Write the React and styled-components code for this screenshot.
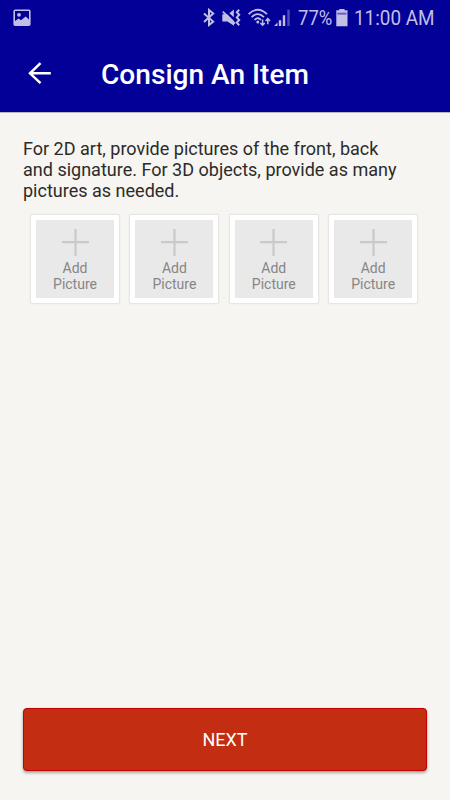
import React from "react";
import styled, { createGlobalStyle } from "styled-components";

const GlobalStyle = createGlobalStyle`
  * { box-sizing: border-box; }
  body { margin: 0; background: #f6f5f1; font-family: Roboto, "Liberation Sans", sans-serif; }
`;

const Screen = styled.div`
  width: 450px;
  height: 800px;
  display: flex;
  flex-direction: column;
  background: #f6f5f1;
  overflow: hidden;
`;

const Header = styled.header`
  height: 113px;
  flex: none;
  background: #030098;
  border-bottom: 1px solid #b9b7bc;
`;

const StatusBar = styled.div`
  height: 36px;
  display: flex;
  align-items: flex-start;
  color: #c1bfe6;
`;

const Icon = styled.svg`
  display: block;
  flex: none;
  width: ${(p) => p.$w}px;
  height: ${(p) => p.$h}px;
  margin-left: ${(p) => p.$left || 0}px;
  margin-top: ${(p) => p.$top || 0}px;
  fill: currentColor;
`;

const StatusText = styled.span`
  width: ${(p) => p.$w}px;
  margin: 6px 0 0 ${(p) => p.$left}px;
  font-size: 21px;
  line-height: 24px;
  white-space: nowrap;
  transform: scaleX(${(p) => p.$scale});
  transform-origin: left;
`;

const TitleBar = styled.div`
  height: 76px;
  display: flex;
  align-items: center;
  color: #fff;
`;

const BackButton = styled.button`
  width: 24px;
  height: 24px;
  margin: 0 0 3px 28px;
  padding: 0;
  border: 0;
  background: none;
  color: #fff;
`;

const Title = styled.h1`
  margin: 1px 0 0 49px;
  font-size: 28.1px;
  line-height: 34px;
  font-weight: 500;
  white-space: nowrap;
`;

const Main = styled.main`
  flex: 1;
  display: flex;
  flex-direction: column;
  padding: 25px 23px 29px;
`;

const Intro = styled.p`
  margin: 0;
  font-size: 18.03px;
  line-height: 21px;
  color: #2b2b2b;
  white-space: nowrap;
`;

const Tiles = styled.div`
  display: flex;
  gap: 11.4px;
  margin: 14px 0 0 8px;
`;

const Tile = styled.button`
  width: 88px;
  height: 88px;
  flex: none;
  padding: 9px 0 0;
  display: flex;
  flex-direction: column;
  align-items: center;
  border: 5px solid #fff;
  border-radius: 1px;
  background: #e9e9e9;
  box-shadow: 0 0 1.5px 0.5px #e4e3df;
  font-family: inherit;
  font-size: 14px;
  line-height: 16px;
  color: #868686;
`;

const TileLabel = styled.span`
  margin-top: 4px;
`;

const NextButton = styled.button`
  width: 404px;
  height: 63px;
  margin-top: auto;
  padding: 1px 0 0;
  border: 1px solid #c40000;
  border-radius: 4px;
  background: #c32d12;
  box-shadow: 0 2px 3px rgba(0, 0, 0, 0.32), 0 0 1px rgba(0, 0, 0, 0.25);
  color: #fff;
  font-family: inherit;
  font-size: 18px;
  line-height: 22px;
`;

const PictureIcon = () => (
  <Icon $w={18} $h={18} $left={13} $top={9} viewBox="0 0 18 18">
    <rect x="1.2" y="1.2" width="15.6" height="15" rx="1" fill="none" stroke="currentColor" strokeWidth="1.6" />
    <circle cx="6" cy="5.8" r="1.9" />
    <path d="M2 12 5.6 9.5 8 11.2 12.7 7.6 16.5 11V16H2Z" />
  </Icon>
);

const BluetoothIcon = () => (
  <Icon $w={14} $h={20} $left={171} $top={8} viewBox="0 0 14 20">
    <path d="M2 5.5 11.2 13.6 7 17V2L11.2 5.6 2 13.9" fill="none" stroke="currentColor" strokeWidth="2" />
  </Icon>
);

const MuteIcon = () => (
  <Icon $w={20} $h={20} $left={6} $top={8} viewBox="0 0 20 20">
    <path d="M.3 6.2H5.2L12 13V17.8L5.4 13.5H.3V9Z" />
    <path d="M7.4 5.3 11.8 1.6V9.2Z" />
    <path d="M.8 3.7 13 15.7" fill="none" stroke="currentColor" strokeWidth="1.8" />
    <path d="M17.2 1.8 14.8 4.2 17.2 6.8 14.8 9.4 17.2 12 14.8 14.6 17.2 17.2" fill="none" stroke="currentColor" strokeWidth="2" />
  </Icon>
);

const WifiIcon = () => (
  <Icon $w={24} $h={20} $left={6} $top={8} viewBox="0 0 24 20">
    <path d="M.6 6.1Q9.8 -2.7 19 6.1M3.6 9.2Q9.8 3 16 9.2M6.6 12Q9.8 8.4 13 12" fill="none" stroke="currentColor" strokeWidth="1.8" />
    <circle cx="9.8" cy="14" r="1.5" />
    <path d="M14.6 11.5V16.8M12.4 14.9 14.6 17.2 16.8 14.9M19.8 16.2V11M17.6 12.9 19.8 10.6 22 12.9" fill="none" stroke="currentColor" strokeWidth="1.5" />
  </Icon>
);

const SignalIcon = () => (
  <Icon $w={18} $h={20} $left={1} $top={8} viewBox="0 0 18 20">
    <path d="M1 18 4.5 14.5V18ZM5.8 12.2H8.2V18H5.8ZM9.8 7.2H12.2V18H9.8Z" />
    <path d="M14.3 1.7H16.7V18H14.3Z" opacity=".4" />
  </Icon>
);

const BatteryIcon = () => (
  <Icon $w={12} $h={18} $left={3} $top={9} viewBox="0 0 12 18">
    <path d="M3.3 0H8.5V1.3H11.5V17.3H.3V1.3H3.3Z" />
    <path d="M1.3 3.7H10.5V5.6H1.3Z" fill="#625fbd" />
  </Icon>
);

const ArrowIcon = () => (
  <Icon $w={24} $h={24} viewBox="0 0 24 24">
    <path d="M12.5 2.2 2 12.3 12.5 22.2M2 12.3H22.8" fill="none" stroke="currentColor" strokeWidth="2.5" />
  </Icon>
);

const PlusIcon = () => (
  <Icon $w={27} $h={27} viewBox="0 0 27 27">
    <path d="M0 13.2H27M13.5 0V27" fill="none" stroke="#cacaca" strokeWidth="2.2" />
  </Icon>
);

const slots = [1, 2, 3, 4];

export default function App() {
  return (
    <Screen>
      <GlobalStyle />
      <Header>
        <StatusBar>
          <PictureIcon />
          <BluetoothIcon />
          <MuteIcon />
          <WifiIcon />
          <SignalIcon />
          <StatusText $left={7} $w={35} $scale={0.88}>77%</StatusText>
          <BatteryIcon />
          <StatusText $left={6} $w={82} $scale={0.9}>11:00 AM</StatusText>
        </StatusBar>
        <TitleBar>
          <BackButton aria-label="Back"><ArrowIcon /></BackButton>
          <Title>Consign An Item</Title>
        </TitleBar>
      </Header>
      <Main>
        <Intro>
          For 2D art, provide pictures of the front, back<br />
          and signature. For 3D objects, provide as many<br />
          pictures as needed.
        </Intro>
        <Tiles>
          {slots.map((slot) => (
            <Tile key={slot}>
              <PlusIcon />
              <TileLabel>Add<br />Picture</TileLabel>
            </Tile>
          ))}
        </Tiles>
        <NextButton>NEXT</NextButton>
      </Main>
    </Screen>
  );
}
